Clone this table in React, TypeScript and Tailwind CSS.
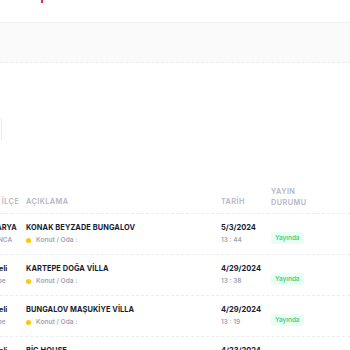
const rows = [
  { city: "SAKARYA", district: "SAPANCA", title: "KONAK BEYZADE BUNGALOV", date: "5/3/2024", time: "13 : 44" },
  { city: "Kocaeli", district: "Kartepe", title: "KARTEPE DOĞA VİLLA", date: "4/29/2024", time: "13 : 38" },
  { city: "Kocaeli", district: "Kartepe", title: "BUNGALOV MAŞUKİYE VİLLA", date: "4/29/2024", time: "13 : 19" },
  { city: "Kocaeli", district: "Kartepe", title: "BİG HOUSE", date: "4/23/2024", time: "13 : 02" },
];

export default function App() {
  return (
    <div className="w-[350px] h-[350px] overflow-hidden bg-white font-['Inter',sans-serif]">
      <div className="h-[23px] border-b border-[#f1f1f4] relative">
        <div className="absolute left-[41px] top-0 w-[2px] h-[3px] bg-[#d9363e]" />
      </div>
      <div className="h-[40px] bg-[#fafafa] border-b border-dashed border-[#ececf0]" />
      <div className="h-[54px]" />
      <div className="h-[23px] w-[3px] -ml-[1px] rounded-md border border-[#ececf0]" />
      <div className="h-[44px]" />

      <div className="-ml-[40px] w-[400px]">
        <div className="flex items-end h-[30px] pb-[5px] text-[7.3px] font-semibold text-[#b5b5c3] tracking-[0.06em] border-b border-dashed border-[#ececf0]">
          <div className="w-[66px] pl-[27px] whitespace-nowrap">İL / İLÇE</div>
          <div className="w-[195px]">AÇIKLAMA</div>
          <div className="w-[50px]">TARİH</div>
          <div className="leading-[11px]">YAYIN<br />DURUMU</div>
        </div>
        {rows.map((r, i) => (
          <div key={i} className="flex items-center h-[41px] border-b border-dashed border-[#ececf0]">
            <div className="w-[66px] flex flex-col pl-[21px]">
              <div className="text-[7.3px] font-bold text-[#181c32] leading-[13px]">{r.city}</div>
              <div className="text-[6.4px] font-semibold text-[#a1a5b7] leading-[13px]">{r.district}</div>
            </div>
            <div className="w-[195px] flex flex-col">
              <div className="text-[7.4px] font-bold text-[#181c32] leading-[13px] tracking-[0.01em]">{r.title}</div>
              <div className="flex items-center gap-[5px] leading-[13px]">
                <span className="w-[5px] h-[5px] rounded-full bg-[#ffc700]" />
                <span className="text-[6.6px] font-semibold text-[#a1a5b7]">Konut / Oda :</span>
              </div>
            </div>
            <div className="w-[50px] flex flex-col">
              <div className="text-[7.5px] font-bold text-[#181c32] leading-[13px]">{r.date}</div>
              <div className="text-[6.5px] font-semibold text-[#a1a5b7] leading-[13px]">{r.time}</div>
            </div>
            <div>
              <span className="inline-flex items-center h-[12px] rounded-[3px] bg-[#e8fff3] text-[#50cd89] text-[6.4px] font-semibold px-[4px] leading-none">Yayında</span>
            </div>
          </div>
        ))}
      </div>
    </div>
  );
}
